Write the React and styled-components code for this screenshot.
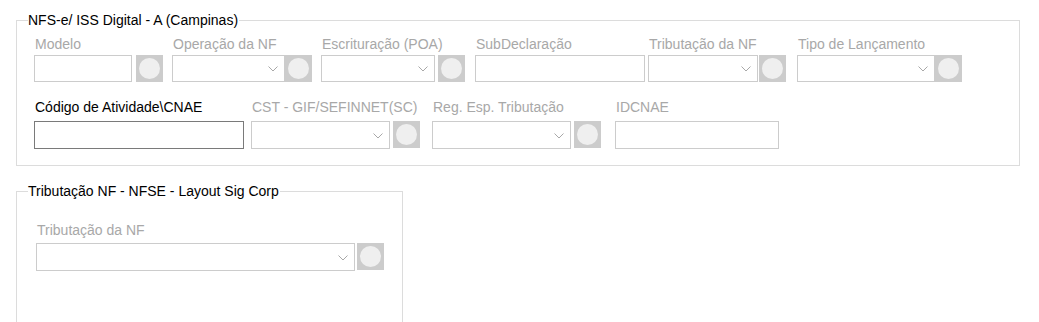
import React from 'react';
import styled, { createGlobalStyle } from 'styled-components';

const GlobalStyle = createGlobalStyle`
  html, body {
    margin: 0;
    padding: 0;
    background: #ffffff;
  }
  body {
    font-family: "Liberation Sans", Arial, sans-serif;
    font-size: 14px;
  }
`;

const Page = styled.div`
  width: 1039px;
  height: 322px;
  overflow: hidden;
  padding: 12px 0 0 16px;
  box-sizing: border-box;
  display: flex;
  flex-direction: column;
  align-items: flex-start;
  gap: 17px;
`;

const GroupBox = styled.fieldset`
  margin: 0;
  padding: 0;
  width: ${p => p.$w}px;
  min-height: ${p => p.$minH || 0}px;
  box-sizing: border-box;
  border: 1px solid #dcdcdc;
  flex: 0 0 auto;
`;

const Title = styled.legend`
  margin-left: 11px;
  padding: 0 1px 0 0;
  line-height: 16px;
  height: 16px;
  color: #000000;
  font-size: 14px;
`;

const Body = styled.div`
  display: flex;
  flex-direction: column;
  padding: ${p => p.$pad};
`;

const Row = styled.div`
  display: flex;
  align-items: flex-start;
  margin-top: ${p => p.$mt || 0}px;
`;

const Field = styled.div`
  display: flex;
  flex-direction: column;
  width: ${p => p.$w}px;
  flex: 0 0 auto;
`;

const Label = styled.div`
  line-height: 16px;
  height: 16px;
  white-space: nowrap;
  padding-left: 1px;
  color: ${p => (p.$enabled ? '#000000' : '#a8a8a8')};
  margin-bottom: ${p => p.$mb}px;
`;

const Control = styled.div`
  display: flex;
  align-items: flex-start;
  gap: ${p => p.$gap}px;
`;

const TextBox = styled.div`
  width: ${p => p.$w}px;
  height: ${p => p.$h}px;
  box-sizing: border-box;
  background: #ffffff;
  border: 1px solid ${p => (p.$enabled ? '#7a7a7a' : '#cccccc')};
`;

const Combo = styled.div`
  width: ${p => p.$w}px;
  height: ${p => p.$h}px;
  box-sizing: border-box;
  background: #ffffff;
  border: 1px solid #cccccc;
  display: flex;
  align-items: center;
  justify-content: flex-end;
  padding-right: 6px;
`;

const Chevron = styled.svg`
  width: 10px;
  height: 6px;
  margin-top: 1px;
`;

const LookupButton = styled.div`
  width: 27px;
  height: 27px;
  box-sizing: border-box;
  background: #cccccc;
  display: flex;
  align-items: center;
  justify-content: center;
  flex: 0 0 auto;
`;

const Dot = styled.div`
  width: 21px;
  height: 21px;
  border-radius: 50%;
  background: #efefef;
`;

const Arrow = () => (
  <Chevron viewBox="0 0 10 6">
    <path d="M0.5 0.5 L5 5 L9.5 0.5" fill="none" stroke="#a8a8a8" strokeWidth="1" />
  </Chevron>
);

const Lookup = () => (
  <LookupButton>
    <Dot />
  </LookupButton>
);

const InputField = ({ label, w, boxW, h, mb, enabled, button, gap = 4 }) => (
  <Field $w={w}>
    <Label $enabled={enabled} $mb={mb}>{label}</Label>
    <Control $gap={gap}>
      <TextBox $w={boxW} $h={h} $enabled={enabled} />
      {button && <Lookup />}
    </Control>
  </Field>
);

const ComboField = ({ label, w, boxW, h, mb, gap = 0 }) => (
  <Field $w={w}>
    <Label $mb={mb}>{label}</Label>
    <Control $gap={gap}>
      <Combo $w={boxW} $h={h}>
        <Arrow />
      </Combo>
      <Lookup />
    </Control>
  </Field>
);

export default function App() {
  return (
    <>
      <GlobalStyle />
      <Page>
        <GroupBox $w={1004}>
          <Title>NFS-e/ ISS Digital - A (Campinas)</Title>
          <Body $pad="8px 0 16px 17px">
            <Row>
              <InputField label="Modelo" w={138} boxW={98} h={27} mb={3} button />
              <ComboField label="Operação da NF" w={149} boxW={113} h={27} mb={3} />
              <ComboField label="Escrituração (POA)" w={154} boxW={114} h={27} mb={3} gap={3} />
              <InputField label="SubDeclaração" w={173} boxW={170} h={27} mb={3} />
              <ComboField label="Tributação da NF" w={149} boxW={110} h={27} mb={3} gap={1} />
              <ComboField label="Tipo de Lançamento" w={180} boxW={138} h={27} mb={3} />
            </Row>
            <Row $mt={17}>
              <InputField label="Código de Atividade\CNAE" w={217} boxW={210} h={28} mb={6} enabled />
              <ComboField label="CST - GIF/SEFINNET(SC)" w={181} boxW={139} h={28} mb={6} gap={3} />
              <ComboField label="Reg. Esp. Tributação" w={183} boxW={139} h={28} mb={6} gap={3} />
              <InputField label="IDCNAE" w={170} boxW={164} h={28} mb={6} />
            </Row>
          </Body>
        </GroupBox>
        <GroupBox $w={387} $minH={160}>
          <Title>Tributação NF - NFSE - Layout Sig Corp</Title>
          <Body $pad="23px 0 0 19px">
            <Row>
              <ComboField label="Tributação da NF" w={360} boxW={319} h={28} mb={5} gap={2} />
            </Row>
          </Body>
        </GroupBox>
      </Page>
    </>
  );
}
